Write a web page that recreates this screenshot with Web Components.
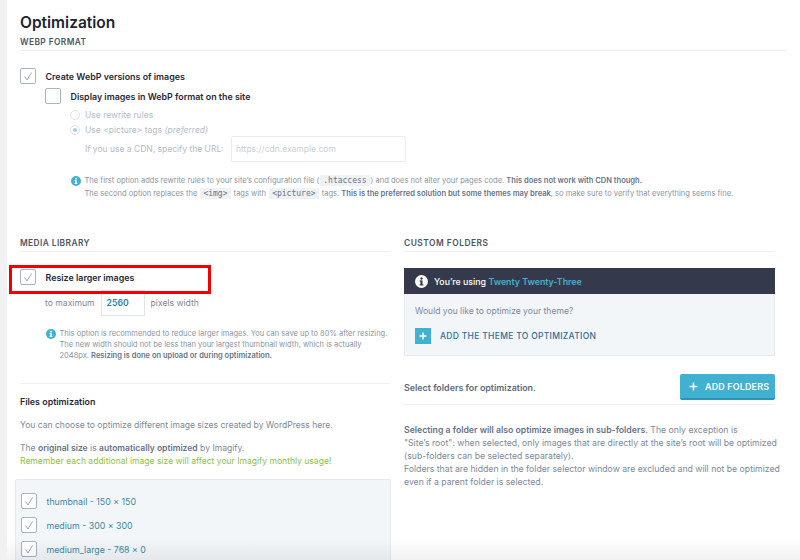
<!DOCTYPE html>
<html>
<head>
<meta charset="utf-8">
<style>
  html, body { margin: 0; height: 560px; overflow: hidden; background: #fff; }
  body { font-family: Inter, "Liberation Sans", sans-serif; font-size: 8.5px; color: #6e7b8f; }
</style>
</head>
<body>
<settings-page></settings-page>

<script>
const CHECK = `<svg width="16" height="16" viewBox="0 0 16 16"><path d="M4.6 8.4 7 12 11.6 4.4" fill="none" stroke="#8fa3b8" stroke-width=".9"/></svg>`;
const info = (size, bg, fg) => `<svg width="${size}" height="${size}" viewBox="0 0 20 20"><circle cx="10" cy="10" r="10" fill="${bg}"/><rect x="8.4" y="8.4" width="3.2" height="7.4" fill="${fg}"/><rect x="7" y="8.4" width="3" height="1.6" fill="${fg}"/><rect x="7" y="14.3" width="6" height="1.6" fill="${fg}"/><circle cx="10" cy="5.4" r="1.8" fill="${fg}"/></svg>`;

class SectionTitle extends HTMLElement {
  constructor() {
    super();
    this.attachShadow({ mode: 'open' }).innerHTML = `
    <style>
      :host { display: block; border-bottom: 1px solid #eef0f3; color: #4a5568; font-size: 8.4px; font-weight: 600; letter-spacing: .4px; height: 12px; line-height: 9px; }
    </style>
    <slot></slot>`;
  }
}
customElements.define('section-title', SectionTitle);

class CheckRow extends HTMLElement {
  constructor() {
    super();
    const on = this.hasAttribute('checked');
    this.attachShadow({ mode: 'open' }).innerHTML = `
    <style>
      :host { display: flex; align-items: center; gap: 9.5px; color: #1f2937; font-weight: 600; font-size: 8.9px; }
      :host([plain]) { color: #3a87ab; font-weight: 400; font-size: 8.8px; }
      .box { width: 16px; height: 16px; box-sizing: border-box; border: 1.5px solid #a4b4c6; border-radius: 2px; background: #fff; position: relative; flex: none; }
      svg { position: absolute; left: -1.5px; top: -1.5px; }
    </style>
    <span class="box">${on ? CHECK : ''}</span><span><slot></slot></span>`;
  }
}
customElements.define('check-row', CheckRow);

class RadioRow extends HTMLElement {
  constructor() {
    super();
    const on = this.hasAttribute('checked');
    this.attachShadow({ mode: 'open' }).innerHTML = `
    <style>
      :host { display: flex; align-items: center; gap: 5px; color: #b4bdc9; font-size: 8.5px; height: 14px; }
      .dot { width: 10px; height: 10px; box-sizing: border-box; border: 1px solid #dfe4ea; border-radius: 50%; display: grid; place-items: center; background: #fff; }
      i { width: 4px; height: 4px; border-radius: 50%; background: #9fd3e3; display: ${on ? 'block' : 'none'}; }
    </style>
    <span class="dot"><i></i></span><span><slot></slot></span>`;
  }
}
customElements.define('radio-row', RadioRow);

class InfoNote extends HTMLElement {
  constructor() {
    super();
    this.attachShadow({ mode: 'open' }).innerHTML = `
    <style>
      :host { display: flex; gap: 4px; font-size: 7.55px; color: #8a95a5; white-space: nowrap; }
      .icon { flex: none; height: 10px; margin-top: 1px; }
    </style>
    <span class="icon">${info(10, '#40b1d0', '#fff')}</span><div><slot></slot></div>`;
  }
}
customElements.define('info-note', InfoNote);

class ThemeCard extends HTMLElement {
  constructor() {
    super();
    this.attachShadow({ mode: 'open' }).innerHTML = `
    <style>
      :host { display: block; background: #f3f6f9; border: 1px solid #e6eaee; border-top: 0; }
      .head { background: #343a4b; height: 26px; display: flex; align-items: center; gap: 6px; padding-left: 11px; color: #fff; font-weight: 500; font-size: 8.8px; margin: 0 -1px; }
      .head b { color: #40b1d0; font-weight: 600; }
      .body { padding: 10px 10px 0; height: 61px; box-sizing: border-box; }
      p { margin: 0; font-size: 8.55px; color: #7c899b; line-height: 14px; }
      .add { display: flex; align-items: center; gap: 9px; margin-top: 10px; color: #2a6f9b; font-weight: 500; font-size: 8.5px; letter-spacing: .3px; }
      .plus { width: 16px; height: 16px; background: #40b1d0; display: grid; place-items: center; }
    </style>
    <div class="head">${info(13, '#fff', '#343a4b')}<span>You’re using <b>Twenty Twenty-Three</b></span></div>
    <div class="body">
      <p>Would you like to optimize your theme?</p>
      <div class="add"><span class="plus"><svg width="8" height="8" viewBox="0 0 8 8"><path d="M4 .5v7M.5 4h7" stroke="#fff" stroke-width="1.5"/></svg></span>ADD THE THEME TO OPTIMIZATION</div>
    </div>`;
  }
}
customElements.define('theme-card', ThemeCard);

class AddButton extends HTMLElement {
  constructor() {
    super();
    this.attachShadow({ mode: 'open' }).innerHTML = `
    <style>
      :host { display: flex; align-items: center; gap: 7px; width: 95px; height: 26px; box-sizing: border-box; padding-left: 9px; background: #40b1d0; border-bottom: 2px solid #2f93b0; border-radius: 2px; color: #fff; font-weight: 600; font-size: 8.9px; letter-spacing: .2px; }
    </style>
    <svg width="9" height="9" viewBox="0 0 9 9"><path d="M4.5 .5v8M.5 4.5h8" stroke="#fff" stroke-width="1.5"/></svg><slot></slot>`;
  }
}
customElements.define('add-button', AddButton);

const pageTpl = document.createElement('template');
pageTpl.innerHTML = `
<style>
  :host { display: block; position: relative; height: 560px; overflow: hidden; border-left: 7px solid #f1f1f2; padding-left: 13px; box-sizing: border-box; }
  h1 { margin: 0; padding-top: 14px; font-size: 15.5px; line-height: 18px; font-weight: 600; color: #1c2430; }
  b { font-weight: 600; color: #66748a; }
  code { font-family: "DejaVu Sans Mono", monospace; font-size: 8px; background: #f0f1f3; color: #66748a; padding: 1px 3px; margin: 0 1px; }
  .top { margin-top: 6px; width: 767px; }
  .webp { padding-top: 17px; height: 188px; box-sizing: border-box; }
  .nested { margin: 4px 0 0 25px; }
  .radios { margin: 4px 0 0 50px; display: grid; row-gap: 1px; }
  .cdn { margin: -1px 0 0 65px; display: flex; align-items: center; font-size: 8.5px; color: #b4bdc9; }
  .cdn .label { width: 146px; }
  .cdn .input { width: 175px; height: 26px; box-sizing: border-box; border: 1px solid #e9edf1; border-radius: 2px; display: flex; align-items: center; padding-left: 4px; font-size: 8.5px; color: #c9d0d9; }
  .webp info-note { margin: 13px 0 0 50.5px; line-height: 12.5px; }
  .cols { display: grid; grid-template-columns: 371px 371px; column-gap: 13px; }
  .max { margin: 5px 0 0 25px; display: flex; align-items: center; gap: 6px; font-size: 8.6px; color: #7c899b; }
  .max .n { width: 44px; height: 26px; box-sizing: border-box; border: 1px solid #dfe4ea; display: flex; align-items: center; padding-left: 5px; color: #2a7fa8; font-weight: 600; font-size: 8.6px; letter-spacing: .1px; }
  .resize { margin-top: 17px; }
  .mark { position: absolute; left: 2px; top: 265px; width: 202px; height: 29px; box-sizing: border-box; border: 3px solid #f00000; pointer-events: none; }
  .media info-note { margin: 12px 0 0 25.5px; line-height: 11.2px; font-size: 7.5px; }
  hr { border: 0; border-top: 1px solid #eef0f3; margin: 0; }
  .media hr { margin-top: 21px; }
  h3 { margin: 12px 0 0; font-size: 8.9px; line-height: 12px; font-weight: 600; color: #1f2937; }
  p { margin: 0; font-size: 8.55px; line-height: 13px; color: #7c899b; }
  .green { color: #8bc34a; }
  .sizes { margin: 11px 0 0 -5px; background: #f3f6f9; border: 1px solid #e6eaee; border-radius: 2px; padding: 13px 0 0 5px; height: 100px; display: grid; row-gap: 8px; align-content: start; }
  .folders { display: flex; justify-content: space-between; align-items: center; margin-top: 18px; padding-bottom: 4px; border-bottom: 1px solid #eef0f3; color: #5c6b80; font-weight: 600; font-size: 8.9px; }
  .custom section-title { letter-spacing: .5px; }
  .custom theme-card { margin-top: 16px; }
  .desc { margin-top: 19px; line-height: 13px; font-size: 8.7px; white-space: nowrap; }
  .fade { position: absolute; left: -7px; right: 0; bottom: 0; height: 22px; background: linear-gradient(rgba(0,0,0,0), rgba(0,0,0,.055)); pointer-events: none; }
</style>
<h1>Optimization</h1>
<div class="top">
  <section-title>WEBP FORMAT</section-title>
  <div class="webp">
    <check-row checked>Create WebP versions of images</check-row>
    <check-row class="nested">Display images in WebP format on the site</check-row>
    <div class="radios">
      <radio-row>Use rewrite rules</radio-row>
      <radio-row checked>Use &lt;picture&gt; tags&nbsp;<em>(preferred)</em></radio-row>
    </div>
    <div class="cdn"><span class="label">If you use a CDN, specify the URL:</span><span class="input">https://cdn.example.com</span></div>
    <info-note>
      The first option adds rewrite rules to your site’s configuration file (<code>.htaccess</code>) and does not alter your pages code. <b>This does not work with CDN though.</b><br>
      The second option replaces the <code>&lt;img&gt;</code> tags with <code>&lt;picture&gt;</code> tags. <b>This is the preferred solution but some themes may break</b>, so make sure to verify that everything seems fine.
    </info-note>
  </div>
</div>
<div class="cols">
  <div class="media">
    <section-title>MEDIA LIBRARY</section-title>
    <div class="resize"><check-row checked>Resize larger images</check-row></div>
    <div class="max">to maximum <span class="n">2560</span> pixels width</div>
    <info-note>
      This option is recommended to reduce larger images. You can save up to 80% after resizing.<br>
      The new width should not be less than your largest thumbnail width, which is actually<br>
      2048px. <b>Resizing is done on upload or during optimization.</b>
    </info-note>
    <hr>
    <h3>Files optimization</h3>
    <p style="margin-top:11px">You can choose to optimize different image sizes created by WordPress here.</p>
    <p style="margin-top:10.5px">The <b>original size</b> is <b>automatically optimized</b> by Imagify.<br><span class="green">Remember each additional image size will affect your Imagify monthly usage!</span></p>
    <div class="sizes">
      <check-row checked plain>thumbnail - 150 × 150</check-row>
      <check-row checked plain>medium - 300 × 300</check-row>
      <check-row checked plain>medium_large - 768 × 0</check-row>
    </div>
  </div>
  <div class="custom">
    <section-title>CUSTOM FOLDERS</section-title>
    <theme-card></theme-card>
    <div class="folders"><span>Select folders for optimization.</span><add-button>ADD FOLDERS</add-button></div>
    <p class="desc"><b>Selecting a folder will also optimize images in sub-folders.</b> The only exception is<br>"Site’s root": when selected, only images that are directly at the site’s root will be optimized<br>(sub-folders can be selected separately).<br>Folders that are hidden in the folder selector window are excluded and will not be optimized<br>even if a parent folder is selected.</p>
  </div>
</div>
<span class="mark"></span>
<div class="fade"></div>`;

class SettingsPage extends HTMLElement {
  constructor() {
    super();
    this.attachShadow({ mode: 'open' }).appendChild(pageTpl.content.cloneNode(true));
  }
}
customElements.define('settings-page', SettingsPage);
</script>
</body>
</html>
